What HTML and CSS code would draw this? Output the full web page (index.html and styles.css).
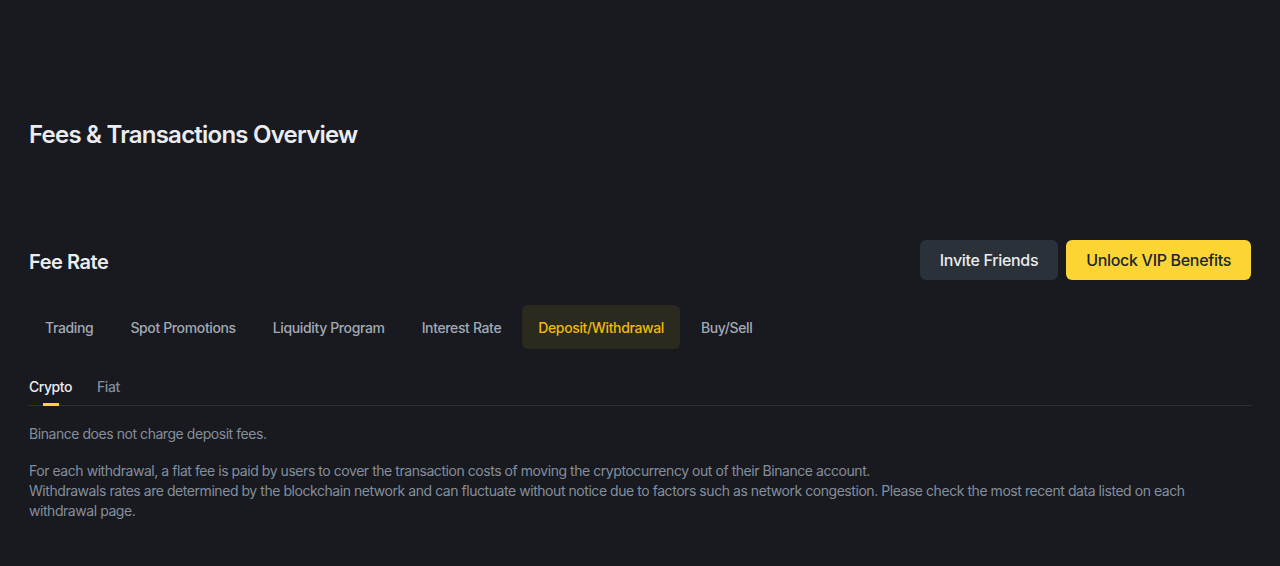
FILE: index.html
```html
<!DOCTYPE html>
<html lang="en">
<head>
<meta charset="utf-8">
<title>Fees & Transactions Overview</title>
<link rel="stylesheet" href="styles.css">
</head>
<body>
<main class="page">
  <h1 class="title">Fees &amp; Transactions Overview</h1>

  <section class="fee">
    <div class="fee-head">
      <h2 class="fee-title">Fee Rate</h2>
      <div class="actions">
        <button class="btn btn-dark">Invite Friends</button>
        <button class="btn btn-yellow">Unlock VIP Benefits</button>
      </div>
    </div>

    <nav class="tabs">
      <span class="tab">Trading</span>
      <span class="tab">Spot Promotions</span>
      <span class="tab">Liquidity Program</span>
      <span class="tab">Interest Rate</span>
      <span class="tab tab-active">Deposit/Withdrawal</span>
      <span class="tab">Buy/Sell</span>
    </nav>

    <div class="subtabs">
      <span class="subtab subtab-active">Crypto</span>
      <span class="subtab">Fiat</span>
    </div>

    <div class="content">
      <p class="para">Binance does not charge deposit fees.</p>
      <p class="para">For each withdrawal, a flat fee is paid by users to cover the transaction costs of moving the cryptocurrency out of their Binance account.<br>Withdrawals rates are determined by the blockchain network and can fluctuate without notice due to factors such as network congestion. Please check the most recent data listed on each withdrawal page.</p>
    </div>
  </section>
</main>
</body>
</html>
```

FILE: styles.css
```css
html, body {
  margin: 0;
  padding: 0;
  background: #181a20;
  height: 100%;
}
body {
  font-family: "Inter", "Noto Sans", "Liberation Sans", sans-serif;
  color: #eaecef;
  letter-spacing: -0.028em;
}
.page {
  padding: 119px 28px 0 28px;
}
.title {
  margin: 0 0 0 1px;
  font-size: 24px;
  line-height: 32px;
  font-weight: 600;
  letter-spacing: -0.032em;
  color: #eaecef;
}
.fee {
  margin-top: 89px;
}
.fee-head {
  display: flex;
  align-items: center;
  justify-content: space-between;
  height: 40px;
}
.fee-title {
  margin: 4px 0 0 1px;
  font-size: 20px;
  line-height: 28px;
  font-weight: 600;
  color: #eaecef;
}
.actions {
  display: flex;
  gap: 8px;
  margin-right: 1px;
}
.btn {
  height: 40px;
  padding: 0 20px;
  border: 0;
  border-radius: 6px;
  font-family: inherit;
  letter-spacing: -0.02em;
  font-size: 16px;
  font-weight: 500;
  cursor: pointer;
}
.btn-dark {
  background: #2b3139;
  color: #eaecef;
}
.btn-yellow {
  background: #fcd535;
  color: #202630;
}
.tabs {
  display: flex;
  gap: 5px;
  margin-top: 25px;
  margin-left: 1px;
}
.tab {
  height: 44px;
  padding: 0 16px;
  display: flex;
  align-items: center;
  border-radius: 6px;
  font-size: 14px;
  font-weight: 500;
  letter-spacing: -0.026em;
  color: #a3a9b3;
}
.tab-active {
  background: #2b2a1e;
  color: #f0b90b;
}
.subtabs {
  display: flex;
  gap: 25px;
  margin-top: 28px;
  border-bottom: 1px solid #2b3139;
  padding-left: 1px;
}
.subtab {
  position: relative;
  font-size: 14px;
  line-height: 20px;
  padding-bottom: 8px;
  font-weight: 500;
  color: #848e9c;
}
.subtab-active {
  color: #eaecef;
}
.subtab-active::after {
  content: "";
  position: absolute;
  left: 50%;
  bottom: -1px;
  width: 16px;
  height: 3px;
  margin-left: -8px;
  background: #fcd535;
}
.content {
  margin-top: 18px;
  padding-left: 1px;
}
.para {
  margin: 0 0 17px 0;
  font-size: 14px;
  line-height: 20px;
  color: #848e9c;
}
```
